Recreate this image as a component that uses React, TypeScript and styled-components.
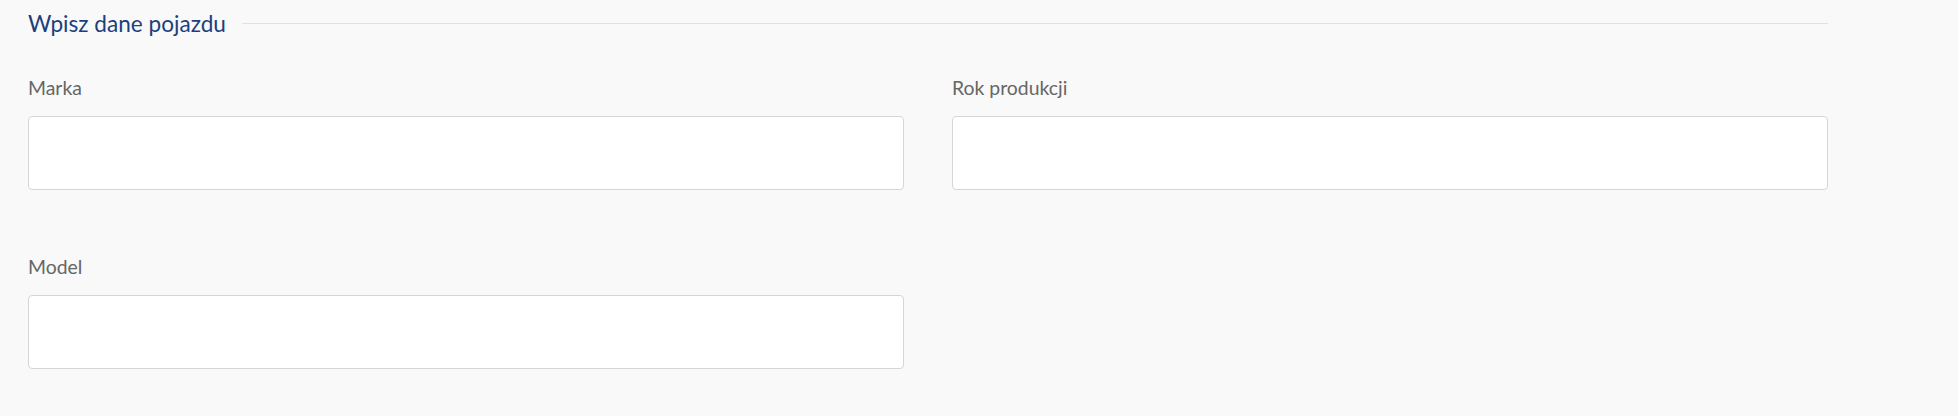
import React from "react";
import styled, { createGlobalStyle } from "styled-components";

const Global = createGlobalStyle`
  html, body { margin: 0; padding: 0; background: #f9f9f9; }
  body { font-family: Lato, "Open Sans", sans-serif; }
  * { box-sizing: border-box; }
`;

const Page = styled.div`
  width: 1958px;
  height: 416px;
  background: #f9f9f9;
  padding: 6px 0 0 28px;
`;

const Section = styled.section`
  width: 1800px;
`;

const Header = styled.div`
  display: flex;
  align-items: center;
  gap: 16px;
  height: 34px;
`;

const Title = styled.h2`
  margin: 0;
  font-family: Lato, sans-serif;
  font-weight: 400;
  font-size: 22.6px;
  color: #1c3f7e;
  white-space: nowrap;
`;

const Rule = styled.div`
  flex: 1;
  height: 1px;
  background: #e0e0e0;
`;

const Grid = styled.div`
  display: grid;
  grid-template-columns: 876px 876px;
  column-gap: 48px;
  row-gap: 65px;
  margin-top: 36px;
`;

const Field = styled.div`
  display: flex;
  flex-direction: column;
`;

const Label = styled.label`
  font-family: Lato, sans-serif;
  font-size: 19.4px;
  line-height: 24px;
  color: #666;
  margin-bottom: 16px;
`;

const Input = styled.input`
  height: 74px;
  width: 100%;
  background: #fff;
  border: 1px solid #d6d6d6;
  border-radius: 4px;
  outline: none;
  font-size: 18px;
  padding: 0 16px;
`;

const fields = [
  { id: "marka", label: "Marka" },
  { id: "rok", label: "Rok produkcji" },
  { id: "model", label: "Model" },
];

export default function App() {
  return (
    <>
      <Global />
      <Page>
        <Section>
          <Header>
            <Title>Wpisz dane pojazdu</Title>
            <Rule />
          </Header>
          <Grid>
            {fields.map((f) => (
              <Field key={f.id}>
                <Label htmlFor={f.id}>{f.label}</Label>
                <Input id={f.id} type="text" />
              </Field>
            ))}
          </Grid>
        </Section>
      </Page>
    </>
  );
}
